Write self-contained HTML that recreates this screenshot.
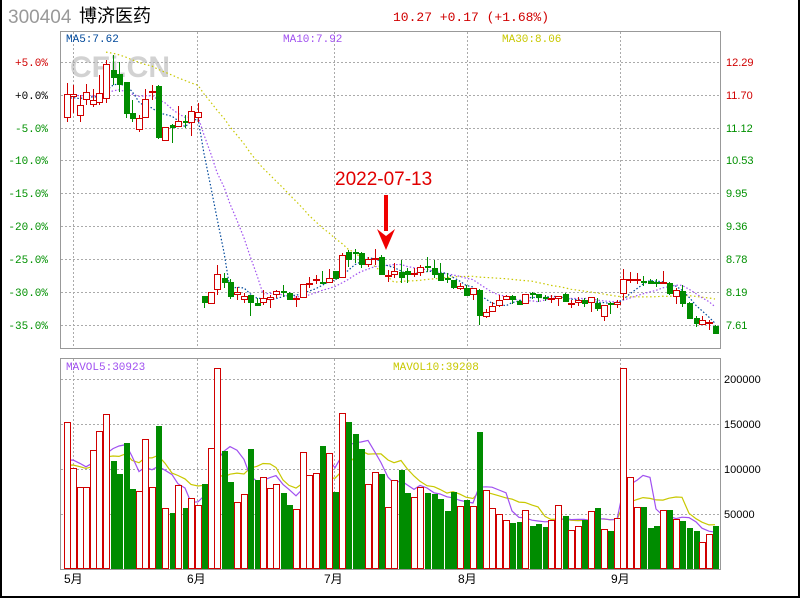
<!DOCTYPE html>
<html><head><meta charset="utf-8"><style>
html,body{margin:0;padding:0;background:#fff;}
body{width:800px;height:600px;overflow:hidden;position:relative;}
#f{position:absolute;left:0;top:0;width:796px;height:596px;border-left:2px solid #000;border-right:2px solid #000;border-bottom:2px solid #000;border-top:0;}
svg{position:absolute;left:0;top:0;}
text{font-family:"Liberation Mono",monospace;}
.sans{font-family:"Liberation Sans","Noto Sans CJK SC",sans-serif;}
</style></head><body>
<div id="f"></div>
<svg id="s" width="800" height="600" xmlns="http://www.w3.org/2000/svg" shape-rendering="crispEdges">
<text x="8" y="23" class="sans" font-size="19" fill="#999">300404</text>
<text x="79" y="22" class="sans" font-size="18" fill="#000">博济医药</text>
<text x="393" y="21" font-size="13" fill="#d00000">10.27 +0.17 (+1.68%)</text>
<text x="70" y="77" class="sans" font-weight="bold" font-size="30" fill="#d2d2d2">CFi.CN</text>
<g id="grid" stroke="#aaa" stroke-dasharray="2 2" stroke-width="1"></g>
<rect x="60.5" y="31.5" width="660" height="317" fill="none" stroke="#999"/>
<rect x="60.5" y="358.5" width="660" height="211" fill="none" stroke="#999"/>
<g id="lab" font-size="11"></g>
<text x="66" y="42" font-size="11" fill="#00489a">MA5:7.62</text>
<text x="283" y="42" font-size="11" fill="#a050f0">MA10:7.92</text>
<text x="502" y="42" font-size="11" fill="#c8c800">MA30:8.06</text>
<text x="66" y="370" font-size="11" fill="#a050f0">MAVOL5:30923</text>
<text x="393" y="370" font-size="11" fill="#c8c800">MAVOL10:39208</text>
<g id="ma"></g>
<g id="c"></g>
<text x="335" y="185" class="sans" font-size="19" fill="#e00000">2022-07-13</text>
<rect x="384" y="195" width="4" height="36" fill="#f00000"/>
<polygon points="377,229 386,236 395,229 386,250" fill="#f00000" shape-rendering="auto"/>
</svg>
<script>
var P=[['r',94,117,83,122],['r',94,96,85,113],['r',105,115,95,122],['r',92,99,84,105],['r',100,104,89,107],['r',93,102,75,105],['r',64,98,60,103],['g',70,77,55,85],['g',74,84,62,92],['g',82,113,82,118],['g',113,118,100,122],['r',118,129,115,132],['r',99,117,89,118],['r',91,92,85,100],['g',86,137,85,139],['r',127,140,127,141],['g',125,127,124,143],['r',121,126,106,127],['g',121,122,115,128],['r',111,122,106,136],['r',112,117,103,122],['g',296,302,296,308],['r',292,303,292,304],['r',274,289,265,295],['g',278,282,273,288],['g',282,296,279,299],['r',292,294,287,300],['r',296,299,293,303],['g',295,302,295,316],['g',303,305,298,306],['r',298,302,290,305],['r',297,299,295,308],['r',291,294,290,298],['g',291,292,285,297],['g',293,299,292,300],['r',298,299,296,307],['r',284,297,284,298],['r',283,284,277,288],['r',279,280,275,284],['g',282,283,271,283],['r',278,282,269,283],['g',271,278,271,279],['r',255,277,253,278],['g',252,259,250,267],['g',252,253,249,263],['g',253,264,252,268],['r',259,264,257,267],['r',258,259,249,265],['g',257,274,255,275],['r',275,276,270,282],['r',271,274,263,278],['g',272,277,260,283],['g',271,274,268,283],['r',273,274,268,277],['r',267,272,265,276],['g',266,267,257,272],['g',268,274,260,278],['g',273,280,263,280],['g',278,279,273,283],['g',280,287,280,289],['r',286,288,283,290],['g',288,295,285,296],['r',288,294,288,300],['g',290,315,289,325],['r',312,316,309,318],['r',306,311,302,312],['r',300,305,295,307],['r',296,299,295,300],['g',296,299,295,304],['g',301,304,300,305],['r',294,303,294,304],['g',293,294,292,299],['g',294,297,294,302],['g',297,298,295,301],['r',298,299,295,303],['r',296,298,296,306],['g',294,301,293,302],['r',303,304,300,308],['r',300,302,297,306],['g',300,303,298,307],['r',297,302,297,312],['g',303,308,298,311],['r',305,316,305,321],['g',303,304,302,314],['r',302,304,300,308],['r',279,293,269,300],['r',279,280,272,283],['r',279,280,273,284],['g',281,282,276,286],['g',281,283,279,284],['g',282,283,279,287],['r',282,283,271,283],['g',283,293,282,295],['r',290,296,288,304],['g',291,303,285,307],['g',303,318,302,318],['g',318,323,316,327],['r',320,324,316,325],['r',322,323,320,330],['g',326,333,325,334]];
var V=[422,468,487,487,450,431,414,461,474,443,489,491,439,487,426,508,513,485,508,498,505,484,448,368,451,482,502,494,449,480,477,488,484,493,505,509,452,475,473,446,453,492,413,422,434,449,484,472,474,507,480,470,493,497,487,493,494,499,511,492,506,500,506,432,490,508,514,520,523,522,510,526,524,527,520,505,516,530,526,520,511,508,529,531,518,368,477,507,507,528,526,510,510,519,521,528,531,542,534,526];
var NS='http://www.w3.org/2000/svg';
function el(p,n,a,t){var e=document.createElementNS(NS,n);for(var k in a)e.setAttribute(k,a[k]);if(t)e.textContent=t;p.appendChild(e);return e;}
var g=document.getElementById('grid'),lab=document.getElementById('lab'),c=document.getElementById('c'),ma=document.getElementById('ma');
var hy=[62,95,128,160,193,226,259,292,325],L=['+5.0%','+0.0%','-5.0%','-10.0%','-15.0%','-20.0%','-25.0%','-30.0%','-35.0%'],R=['12.29','11.70','11.12','10.53','9.95','9.36','8.78','8.19','7.61'];
hy.forEach(function(y,i){el(g,'line',{x1:61,x2:720,y1:y+.5,y2:y+.5});el(lab,'text',{x:48,y:y+4,'text-anchor':'end',fill:i==0?'#d00000':(i==1?'#000':'#009000')},L[i]);el(lab,'text',{x:726,y:y+4,fill:i<2?'#d00000':'#009000','class':'sans'},R[i]);});
[[379,'200000'],[424,'150000'],[469,'100000'],[514,'50000']].forEach(function(a){el(g,'line',{x1:61,x2:720,y1:a[0]+.5,y2:a[0]+.5});el(lab,'text',{x:724,y:a[0]+4,fill:'#000','class':'sans'},a[1]);});
[73,197,334,467,620].forEach(function(x){el(g,'line',{x1:x+.5,x2:x+.5,y1:32,y2:348});el(g,'line',{x1:x+.5,x2:x+.5,y1:359,y2:569});});
[[64,'5月'],[187,'6月'],[324,'7月'],[458,'8月'],[611,'9月']].forEach(function(a){el(lab,'text',{x:a[0],y:583,fill:'#000','font-size':12,'class':'sans'},a[1]);});
var RED='#d00000',GRN='#008c00';
function X(i){return Math.round(66.7+6.55*i);}
var closes=[];
P.forEach(function(p,i){var x=X(i),col=p[0]=='r'?RED:GRN;closes.push(p[0]=='r'?p[1]:p[2]);
 var t=p[1],b=p[2];if(b-t<1)b=t+1;
 el(c,'line',{x1:x+.5,x2:x+.5,y1:p[3],y2:t,stroke:col});
 el(c,'line',{x1:x+.5,x2:x+.5,y1:b,y2:p[4],stroke:col});
 if(p[0]=='r')el(c,'rect',{x:x-2.5,y:t+.5,width:6,height:b-t,fill:'#fff',stroke:col});
 else el(c,'rect',{x:x-2,y:t,width:6,height:b-t+1,fill:col});
 var v=V[i];
 if(p[0]=='r')el(c,'rect',{x:x-2.5,y:v+.5,width:6,height:569-v-1,fill:'#fff',stroke:col});
 else el(c,'rect',{x:x-2,y:v,width:6,height:569-v,fill:col});
});
function mav(arr,n,pre){var o=[];for(var i=0;i<arr.length;i++){var s=0;for(var k=i-n+1;k<=i;k++)s+=(k<0?pre:arr[k]);o.push(s/n);}return o;}
function line(a,col,dash,start){var pts=[];for(var i=start||0;i<a.length;i++)pts.push(X(i)+','+a[i].toFixed(1));el(ma,'polyline',{points:pts.join(' '),fill:'none',stroke:col,'stroke-width':1.2,'stroke-dasharray':dash||'none','shape-rendering':'auto'});}
line(mav(closes,30,40),'#c8c800','1.5 2.5',6);
line(mav(closes,10,95),'#a050f0','1.5 2');
line(mav(closes,5,100),'#00489a','1.5 2');
line(mav(V,10,470),'#c8c800');
line(mav(V,5,470),'#a050f0');
</script>
</body></html>
